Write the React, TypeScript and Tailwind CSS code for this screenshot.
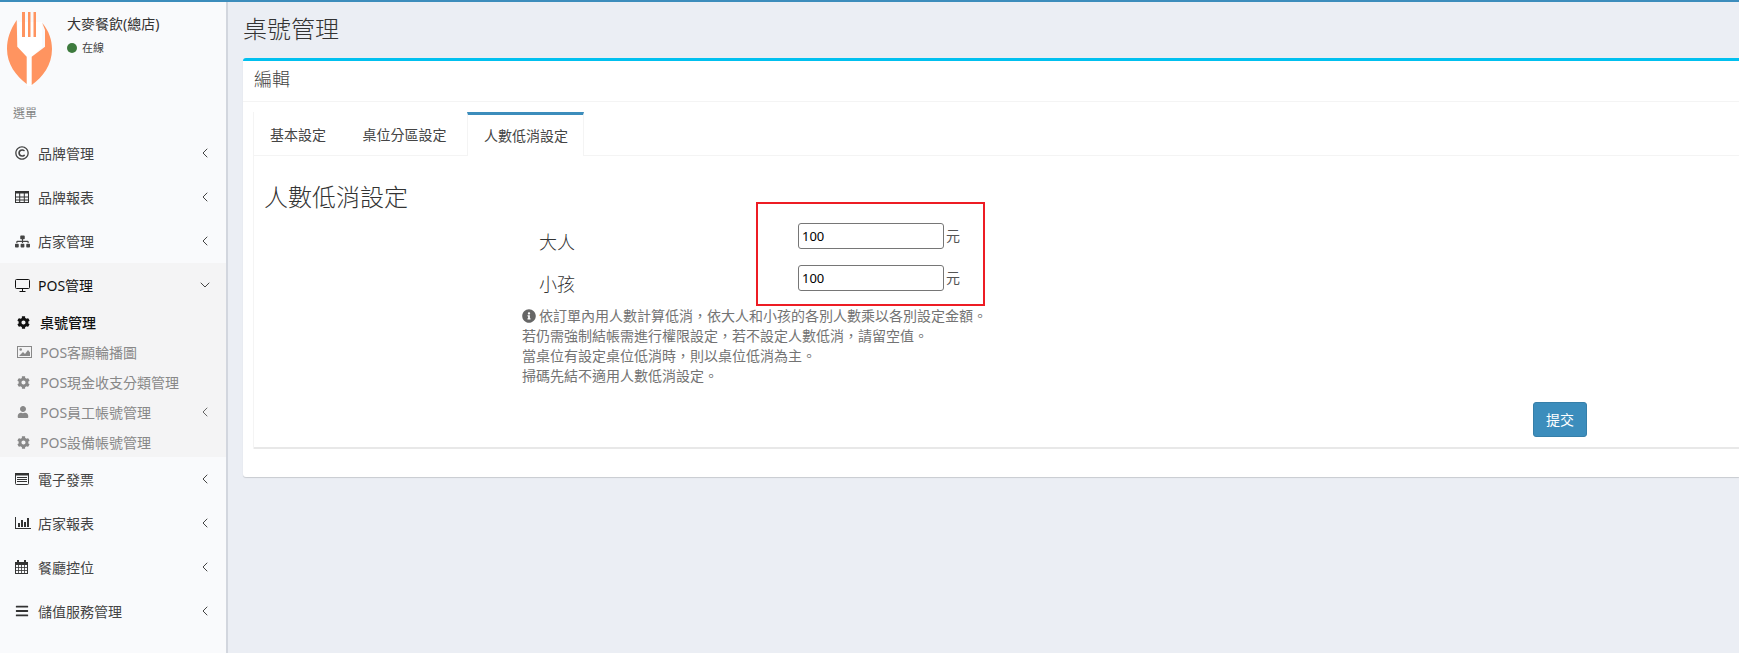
import React from "react";
import { ChevronDown, ChevronLeft } from "lucide-react";
import { FaBars, FaCog, FaInfoCircle, FaRegCopyright, FaSitemap, FaUser } from "react-icons/fa";

const font = "font-['Noto_Sans','Noto_Sans_CJK_TC',sans-serif]";

const Logo = () => (
  <svg width="46" height="74" viewBox="0 0 46 74" className="shrink-0">
    <path d="M11 10 H35 V35 L25 45 V74 H20 V45 L10 35 Z" fill="#fff" />
    <path d="M9.7 8 C3 18 0 27 0 37 C0 52 9 64 19.7 72 V44.7 L10.3 34.7 Z" fill="#ff9460" />
    <path d="M35.3 11 C42 19 45 28 45 37 C45 53 36 65 24.7 73 V44.7 L38 34.7 V18 Z" fill="#ff9460" />
    <rect x="15" y="0" width="3" height="25" fill="#ff9460" />
    <rect x="21" y="0" width="2.5" height="25" fill="#ff9460" />
    <rect x="26.5" y="0" width="2.5" height="25" fill="#ff9460" />
  </svg>
);

const TableIcon = () => (
  <svg width="14" height="12" viewBox="0 0 14 12" fill="none" stroke="#333" strokeWidth="1">
    <rect x="0.5" y="0.5" width="13" height="11" strokeWidth="1" />
    <rect x="0" y="0" width="14" height="2.5" fill="#333" stroke="none" />
    <path d="M0 6h14M0 9h14M4.7 2v10M9.3 2v10" />
  </svg>
);

const MonitorIcon = () => (
  <svg width="16" height="13" viewBox="0 0 16 13" fill="none" stroke="#111" strokeWidth="1">
    <rect x="0.5" y="0.5" width="14" height="9" rx="1" />
    <path d="M7.5 10v2M4.5 12.5h6" />
  </svg>
);

const ImageIcon = () => (
  <svg width="15" height="12" viewBox="0 0 15 12">
    <rect x="0.5" y="0.5" width="14" height="11" fill="none" stroke="#888" />
    <circle cx="3.7" cy="3.5" r="1.3" fill="#888" />
    <path d="M2 10 L6 6 L8 8 L11 4 L13 6.5 V10 Z" fill="#888" />
  </svg>
);

const ListIcon = () => (
  <svg width="14" height="12" viewBox="0 0 14 12" fill="none" stroke="#333">
    <rect x="0.5" y="0.5" width="13" height="11" rx="1" />
    <rect x="0" y="0" width="14" height="2.5" fill="#333" stroke="none" />
    <path d="M2 4.5h10M2 6.5h10M2 8.5h10" />
  </svg>
);

const ChartIcon = () => (
  <svg width="16" height="12" viewBox="0 0 16 12" fill="#333">
    <path d="M0 0h1v11h15v1H0z" />
    <rect x="3" y="6" width="2" height="4" />
    <rect x="6" y="3" width="2" height="7" />
    <rect x="9" y="5" width="2" height="5" />
    <rect x="12" y="1" width="2" height="9" />
  </svg>
);

const CalendarIcon = () => (
  <svg width="13" height="14" viewBox="0 0 13 14" fill="none" stroke="#333">
    <rect x="0.5" y="2.5" width="12" height="11" />
    <rect x="0" y="2" width="13" height="3" fill="#333" stroke="none" />
    <rect x="2" y="0" width="2" height="3" fill="#333" stroke="none" />
    <rect x="9" y="0" width="2" height="3" fill="#333" stroke="none" />
    <path d="M0 7.5h13M0 10.5h13M3.5 5v9M6.5 5v9M9.5 5v9" strokeWidth="0.8" />
  </svg>
);

const MenuItem = ({ icon, title, active }: { icon: React.ReactNode; title: string; active?: boolean }) => (
  <div className={`flex items-center h-11 pl-[15px] pr-[13px] text-[14px] ${active ? "text-[#111]" : "text-[#444]"}`}>
    <span className="w-[23px] flex items-center">{icon}</span>
    <span className="flex-1">{title}</span>
    {active ? <ChevronDown size={16} strokeWidth={1.5} color="#444" /> : <ChevronLeft size={16} strokeWidth={1.5} color="#444" />}
  </div>
);

const SubItem = ({ icon, title, active, arrow }: { icon: React.ReactNode; title: string; active?: boolean; arrow?: boolean }) => (
  <div className={`flex items-center h-[30px] pl-[17px] pr-[13px] text-[14px] ${active ? "text-[#111] font-medium" : "text-[#888]"}`}>
    <span className="w-[23px] flex items-center">{icon}</span>
    <span className="flex-1">{title}</span>
    {arrow && <ChevronLeft size={16} strokeWidth={1.5} color="#666" />}
  </div>
);

const Sidebar = () => (
  <aside className="w-[228px] shrink-0 bg-[#f9fafc] border-r-2 border-[#d2d6de]">
    <div className="flex items-start pl-[7px] pt-[10px] h-[85px]">
      <Logo />
      <div className="ml-[14px] pt-[2px]">
        <p className="text-[14px] leading-[20px] text-[#333]">大麥餐飲(總店)</p>
        <div className="flex items-center mt-[6px] text-[11px] text-[#444]">
          <span className="w-[10px] h-[10px] rounded-full bg-[#3d7a3d] mr-[5px]" />
          在線
        </div>
      </div>
    </div>
    <p className="h-[44px] pl-[13px] pt-[17px] text-[12px] leading-[20px] text-[#848484]">選單</p>
    <MenuItem icon={<FaRegCopyright size={14} color="#444" />} title="品牌管理" />
    <MenuItem icon={<TableIcon />} title="品牌報表" />
    <MenuItem icon={<FaSitemap size={15} color="#444" />} title="店家管理" />
    <div className="bg-[#f4f4f5] h-[194px] mt-px">
      <div className="-mt-px">
        <MenuItem icon={<MonitorIcon />} title="POS管理" active />
        <SubItem icon={<FaCog size={13} color="#111" />} title="桌號管理" active />
        <SubItem icon={<ImageIcon />} title="POS客顯輪播圖" />
        <SubItem icon={<FaCog size={13} color="#888" />} title="POS現金收支分類管理" />
        <SubItem icon={<FaUser size={12} color="#888" />} title="POS員工帳號管理" arrow />
        <SubItem icon={<FaCog size={13} color="#888" />} title="POS設備帳號管理" />
      </div>
    </div>
    <MenuItem icon={<ListIcon />} title="電子發票" />
    <MenuItem icon={<ChartIcon />} title="店家報表" />
    <MenuItem icon={<CalendarIcon />} title="餐廳控位" />
    <MenuItem icon={<FaBars size={14} color="#333" />} title="儲值服務管理" />
  </aside>
);

const Tab = ({ title, active }: { title: string; active?: boolean }) => (
  <div
    className={
      active
        ? "h-[44px] pl-[16px] pr-[15px] flex items-center text-[14px] text-[#444] border-t-[3px] border-t-[#3c8dbc] border-x border-x-[#f4f4f4] bg-white -mb-px"
        : "h-[43px] px-[16px] mr-[4.5px] flex items-center text-[14px] text-[#444] mt-[1px]"
    }
  >
    {title}
  </div>
);

const AmountRow = ({ label }: { label: string }) => (
  <div className="flex items-start h-[42px]">
    <span className="w-[276px] pl-[17px] text-[18px] font-light leading-[40px] text-[#333]">{label}</span>
    <input
      readOnly
      value="100"
      className="w-[146px] h-[26px] mt-[1px] px-[3px] text-[13px] text-black bg-white border border-[#767676] rounded-[3px] outline-none"
    />
    <span className="ml-[2px] text-[14px] leading-[27px] text-[#555]">元</span>
  </div>
);

const App = () => (
  <div className={`${font} w-[1739px] h-[653px] overflow-hidden flex flex-col bg-[#ebeef4]`}>
    <div className="h-[2px] shrink-0 bg-[#3c8dbc]" />
    <div className="flex flex-1 min-h-0">
      <Sidebar />
      <main className="flex-1 min-w-0 pl-[15px]">
        <h1 className="h-[56px] pt-[10px] text-[24px] font-light leading-[34px] text-[#333]">桌號管理</h1>
        <section className="h-[419px] bg-white border-t-[3px] border-[#00c0ef] rounded-l-[3px] shadow-[0_1px_1px_rgba(0,0,0,0.15)]">
          <h2 className="h-[41px] pl-[11px] pb-[4px] flex items-center text-[18px] font-light text-[#444] border-b border-[#f4f4f4]">編輯</h2>
          <div className="ml-[10px] mt-[10px] border-l border-[#f4f4f4]">
            <div className="flex border-b border-[#f4f4f4] h-[44px]">
              <Tab title="基本設定" />
              <Tab title="桌位分區設定" />
              <Tab title="人數低消設定" active />
            </div>
            <div>
              <h3 className="pl-[10px] pt-[24px] text-[24px] font-light leading-[33px] text-[#333]">人數低消設定</h3>
              <div className="ml-[268px] mt-[9px] relative">
                <AmountRow label="大人" />
                <AmountRow label="小孩" />
                <div className="text-[14px] leading-[20px] text-[#737373]">
                  <p className="flex items-center">
                    <FaInfoCircle size={14} color="#666" className="mr-[3px]" />
                    依訂單內用人數計算低消，依大人和小孩的各別人數乘以各別設定金額。
                  </p>
                  <p>若仍需強制結帳需進行權限設定，若不設定人數低消，請留空值。</p>
                  <p>當桌位有設定桌位低消時，則以桌位低消為主。</p>
                  <p>掃碼先結不適用人數低消設定。</p>
                </div>
                <div className="absolute left-[234px] top-[-20px] w-[229px] h-[104px] border-[2px] border-[#ed1c24]" />
              </div>
              <div className="flex h-[47px] mt-[16px] border-b-2 border-[#e8e8e8]">
                <button className="ml-[1279px] w-[54px] h-[35px] text-[14px] text-white bg-[#3c8dbc] border border-[#367fa9] rounded-[3px]">
                  提交
                </button>
              </div>
            </div>
          </div>
        </section>
      </main>
    </div>
  </div>
);

export default App;
